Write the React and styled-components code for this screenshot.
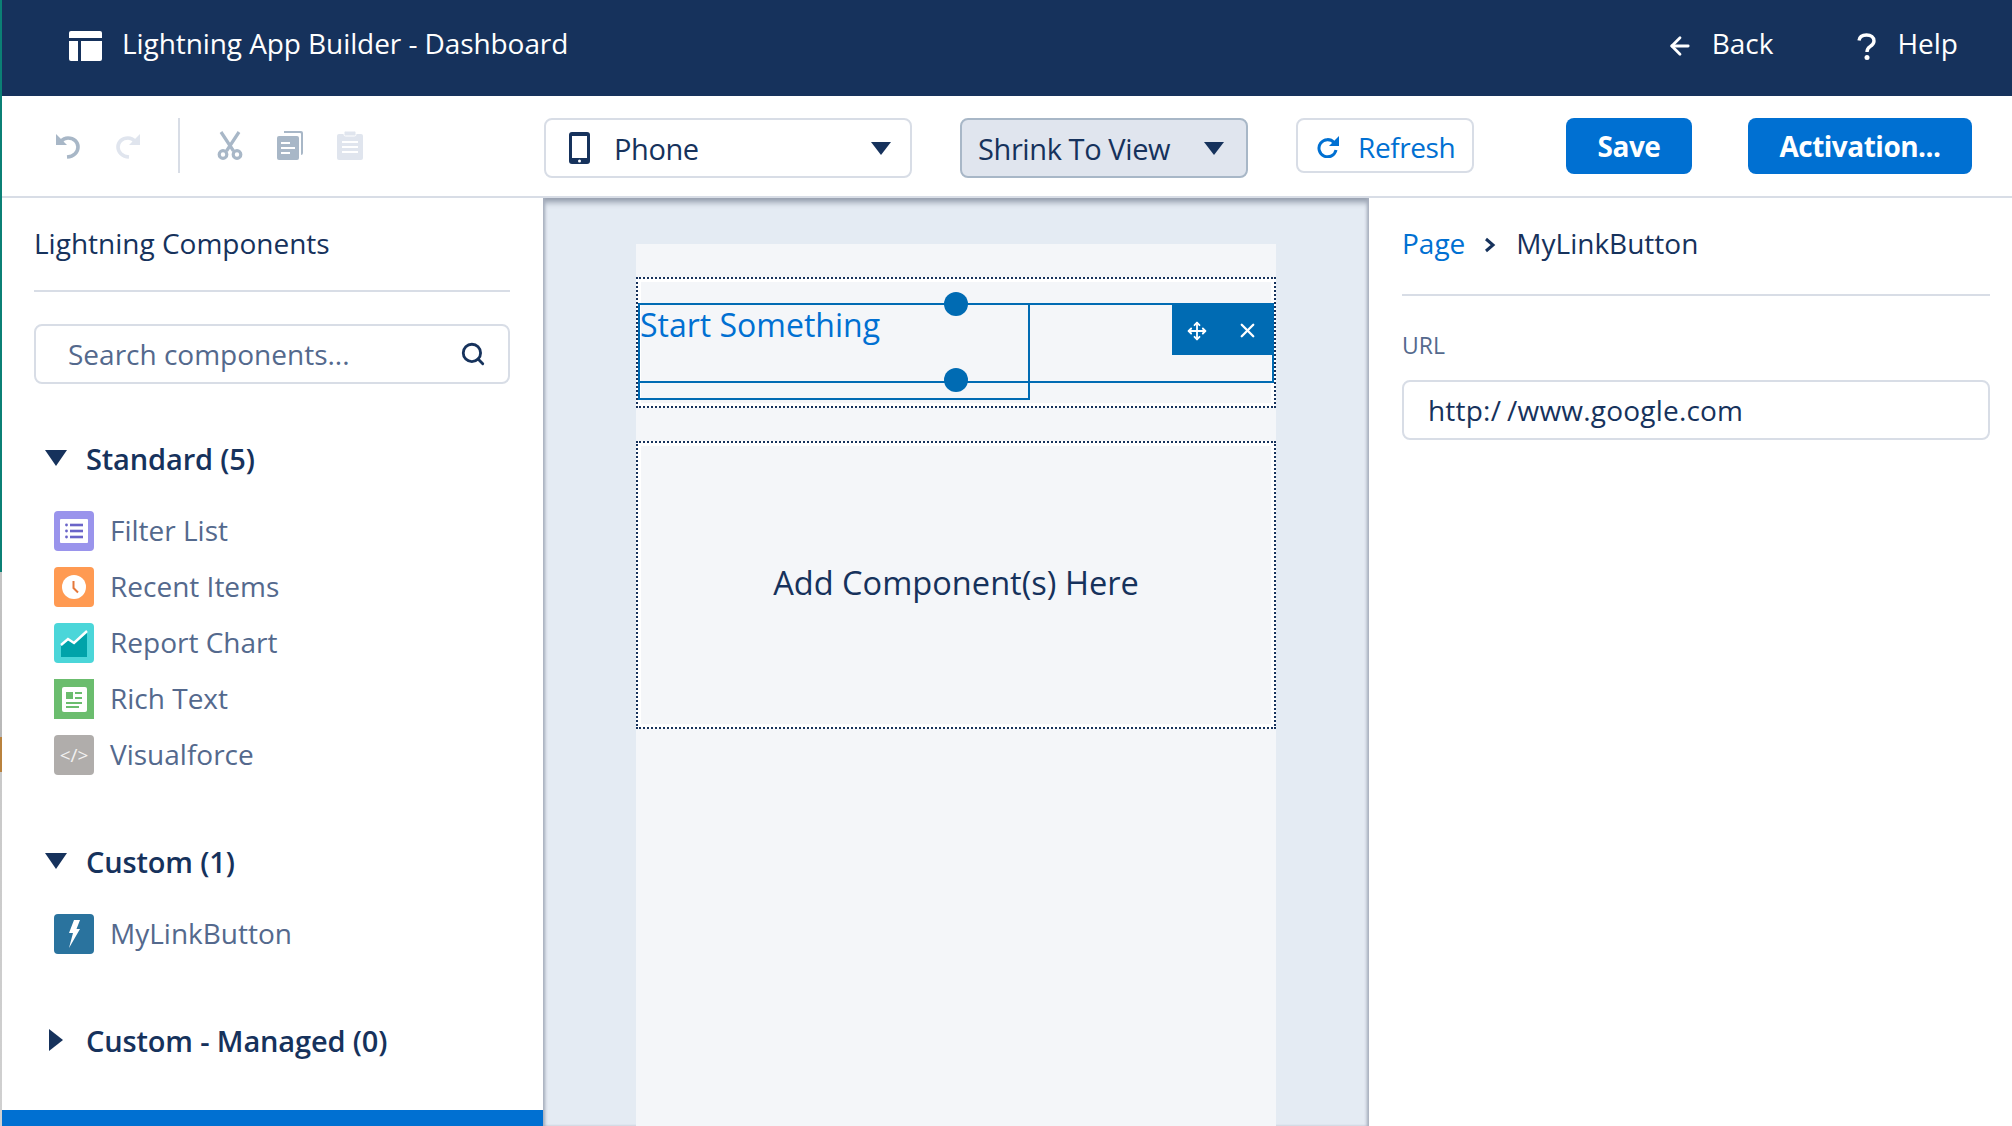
import React from "react";
import styled, { createGlobalStyle } from "styled-components";
import { ArrowLeft, Move, Search, X } from "lucide-react";

const NAVY = "#16325c";
const MUTED = "#54698d";
const LINE = "#d8dde6";
const BLUE = "#0070d2";
const SELECT = "#006bb3";

const GlobalStyle = createGlobalStyle`
    html, body {
        margin: 0;
        padding: 0;
        background: #fff;
    }
    * {
        box-sizing: border-box;
    }
    body {
        font-family: "Open Sans", "Noto Sans", sans-serif;
        color: ${NAVY};
    }
`;

const Page = styled.div`
    display: flex;
    width: 2012px;
    height: 1126px;
    overflow: hidden;
`;

// sliver of the window behind, visible at the left edge of the screenshot
const EdgeStrip = styled.div`
    width: 2px;
    flex: none;
    background: linear-gradient(
        to bottom,
        #0b8075 0,
        #0b8075 572px,
        #c4c4c4 572px,
        #b8b8b8 737px,
        #b9823e 737px,
        #b9823e 772px,
        #c9c9c9 772px,
        #d0d0d0 100%
    );
`;

const Main = styled.div`
    flex: 1;
    min-width: 0;
    display: flex;
    flex-direction: column;
`;

const Header = styled.header`
    height: 96px;
    flex: none;
    background: ${NAVY};
    color: #fff;
    display: flex;
    align-items: center;
    padding: 0 54px 4px 67px;
`;

const AppTitle = styled.div`
    font-size: 28px;
    letter-spacing: -0.08px;
    margin: 0 0 6px 20px;
    flex: 1;
`;

const HeaderLink = styled.div`
    display: flex;
    align-items: center;
    font-size: 28px;
    gap: ${(p) => p.$gap}px;
    margin-left: ${(p) => p.$offset}px;
`;

const LinkText = styled.span`
    margin-bottom: 6px;
`;

const Toolbar = styled.div`
    height: 102px;
    flex: none;
    display: flex;
    align-items: flex-start;
    padding: 22px 0 0 53px;
    background: #fff;
    border-bottom: 2px solid ${LINE};
`;

const ToolGroup = styled.div`
    display: flex;
    align-items: center;
    gap: ${(p) => p.$gap}px;
    height: 55px;
    margin-right: ${(p) => p.$after}px;
`;

const ToolDivider = styled.div`
    width: 2px;
    height: 55px;
    background: ${LINE};
    margin: 0 37px;
`;

const Select = styled.div`
    width: ${(p) => p.$width}px;
    height: 60px;
    margin-right: ${(p) => p.$after}px;
    border: 2px solid ${(p) => (p.$active ? "#a8b7c7" : LINE)};
    border-radius: 8px;
    background: ${(p) => (p.$active ? "#e0e5ee" : "#fff")};
    display: flex;
    align-items: center;
    padding: 0 ${(p) => p.$right}px 0 ${(p) => p.$left}px;
    font-size: 29px;
    letter-spacing: -0.4px;
    color: ${NAVY};
`;

const SelectLabel = styled.span`
    flex: 1;
    margin-left: ${(p) => p.$indent || 0}px;
`;

const Caret = styled.span`
    display: block;
    flex: none;
    width: 0;
    height: 0;
    border-left: ${(p) => p.$size}px solid transparent;
    border-right: ${(p) => p.$size}px solid transparent;
    border-top: ${(p) => p.$depth}px solid ${NAVY};
`;

const RightCaret = styled.span`
    display: block;
    width: 0;
    height: 0;
    border-top: 11px solid transparent;
    border-bottom: 11px solid transparent;
    border-left: 14px solid ${NAVY};
`;

const RefreshButton = styled.div`
    width: 178px;
    height: 55px;
    margin-right: 92px;
    border: 2px solid ${LINE};
    border-radius: 8px;
    display: flex;
    align-items: center;
    gap: 18px;
    padding: 2px 0 0 19px;
    color: ${BLUE};
    font-size: 28px;
    letter-spacing: -0.4px;
`;

const BrandButton = styled.div`
    width: ${(p) => p.$width}px;
    height: 56px;
    margin-right: ${(p) => p.$after}px;
    border-radius: 8px;
    background: ${BLUE};
    color: #fff;
    display: flex;
    align-items: center;
    justify-content: center;
    font-size: 28px;
    font-weight: 700;
    letter-spacing: -0.5px;
`;

const Body = styled.div`
    flex: 1;
    min-height: 0;
    display: flex;
`;

const LeftPanel = styled.aside`
    width: 541px;
    flex: none;
    display: flex;
    flex-direction: column;
    background: #fff;
`;

const LeftContent = styled.div`
    flex: 1;
    padding: 0 33px 0 32px;
`;

const PanelTitle = styled.div`
    height: 94px;
    display: flex;
    align-items: center;
    padding-bottom: 2px;
    font-size: 28px;
    border-bottom: 2px solid ${LINE};
`;

const SearchBox = styled.div`
    height: 60px;
    margin-top: 32px;
    border: 2px solid ${LINE};
    border-radius: 8px;
    display: flex;
    align-items: center;
    padding: 0 22px 0 32px;
    color: ${MUTED};
    font-size: 28px;
`;

const SearchText = styled.span`
    flex: 1;
`;

const SectionHead = styled.div`
    height: 40px;
    margin-top: ${(p) => p.$top}px;
    display: flex;
    align-items: center;
    padding-bottom: 3px;
    font-size: 29px;
    font-weight: 600;
    letter-spacing: -0.15px;
    color: ${NAVY};
`;

const CaretSlot = styled.span`
    width: 52px;
    padding-left: ${(p) => p.$inset}px;
    flex: none;
    margin-top: -2px;
`;

const ItemList = styled.ul`
    list-style: none;
    margin: 31px 0 0;
    padding: 0 0 0 20px;
    display: flex;
    flex-direction: column;
    gap: 16px;
`;

const Item = styled.li`
    height: 40px;
    display: flex;
    align-items: center;
    gap: 16px;
    font-size: 28px;
    color: ${MUTED};
`;

const ItemLabel = styled.span`
    margin-bottom: 2px;
`;

const ItemIcon = styled.span`
    width: 40px;
    height: 40px;
    flex: none;
    border-radius: ${(p) => (p.$square ? 0 : 4)}px;
    background: ${(p) => p.$bg};
    display: flex;
    align-items: center;
    justify-content: center;
`;

const CodeGlyph = styled.span`
    color: #f3f2f2;
    font-size: 19px;
`;

const BottomBar = styled.div`
    height: 16px;
    flex: none;
    background: ${BLUE};
`;

const Center = styled.main`
    flex: 1;
    min-width: 0;
    background: #e4ebf3;
    box-shadow: inset 3px 0 3px -1px #a8b0bf, inset -3px 0 3px -1px #a8b0bf, inset 0 6px 6px -2px #8d96a6;
    display: flex;
    justify-content: center;
    padding-top: 46px;
`;

const Canvas = styled.div`
    width: 640px;
    background: #f4f6f9;
    padding-top: 33px;
    display: flex;
    flex-direction: column;
    gap: 33px;
    align-items: stretch;
    height: 1200px;
`;

const DropRegion = styled.div`
    position: relative;
    height: ${(p) => p.$height}px;
    border: 2px dotted ${NAVY};
    background: #fff;
    padding: 3px;
`;

const RegionFill = styled.div`
    height: 100%;
    background: #f4f6f9;
    display: flex;
    align-items: center;
    justify-content: center;
    padding-bottom: 6px;
    font-size: 32.6px;
    color: ${NAVY};
`;

// selection frames drawn over the dropped component
const SelectionFrame = styled.div`
    position: absolute;
    left: 0;
    top: 24px;
    right: 0;
    height: 80px;
    border: 2px solid ${SELECT};
`;

const ComponentFrame = styled.div`
    position: absolute;
    left: 0;
    top: 24px;
    width: 392px;
    height: 97px;
    border: 2px solid ${SELECT};
    font-size: 32px;
    line-height: 40px;
    color: ${BLUE};
`;

const Handle = styled.span`
    position: absolute;
    left: 50%;
    width: 24px;
    height: 24px;
    margin-left: -12px;
    border-radius: 50%;
    background: ${SELECT};
    ${(p) => (p.$bottom ? "bottom: -11px;" : "top: -13px;")}
`;

const ToolBox = styled.div`
    position: absolute;
    top: -2px;
    right: -2px;
    width: 102px;
    height: 52px;
    background: ${SELECT};
    color: #fff;
    display: flex;
    align-items: center;
    justify-content: space-between;
    padding: 3px 15px 0 15px;
`;

const RightPanel = styled.aside`
    width: 643px;
    flex: none;
    background: #fff;
    padding: 0 22px 0 33px;
`;

const Breadcrumb = styled.div`
    height: 98px;
    display: flex;
    align-items: center;
    padding-bottom: 6px;
    font-size: 28px;
    border-bottom: 2px solid ${LINE};
`;

const CrumbLink = styled.span`
    color: ${BLUE};
`;

const CrumbArrow = styled.svg`
    margin: 4px 20px 0 19px;
`;

const FieldLabel = styled.div`
    margin-top: 31px;
    height: 36px;
    display: flex;
    align-items: center;
    font-size: 23px;
    color: ${MUTED};
`;

const FieldInput = styled.div`
    height: 60px;
    margin-top: 17px;
    border: 2px solid ${LINE};
    border-radius: 8px;
    display: flex;
    align-items: center;
    padding-left: 24px;
    font-size: 28px;
    letter-spacing: 0.2px;
    color: ${NAVY};
`;

const SlashGap = styled.span`
    margin-right: 6px;
`;

const AppLogo = () => (
    <svg width="33" height="30" viewBox="0 0 33 30">
        <path d="M2 0h29a2 2 0 0 1 2 2v5H0V2a2 2 0 0 1 2-2z" fill="#fff" />
        <path d="M0 10h9v20H2a2 2 0 0 1-2-2z" fill="#fff" />
        <path d="M12 10h21v18a2 2 0 0 1-2 2H12z" fill="#fff" />
    </svg>
);

const UndoIcon = ({ color, flip }) => (
    <svg width="26" height="26" viewBox="0 0 26 26" style={flip ? { transform: "scaleX(-1)" } : undefined}>
        <path d="M1 1v11h11z" fill={color} />
        <path d="M6 8.5c2-2.5 4-3.5 7-3.5 6 0 10 4 10 9s-4 9.5-11 10" fill="none" stroke={color} strokeWidth="3.6" />
    </svg>
);

const ScissorsIcon = () => (
    <svg width="26" height="29" viewBox="0 0 26 29">
        <g fill="none" stroke="#a8b7c7" strokeWidth="3.2">
            <path d="M4 1l12.5 19M22 1L9.5 20" />
            <circle cx="6" cy="23.5" r="3.8" />
            <circle cx="20" cy="23.5" r="3.8" />
        </g>
    </svg>
);

const CopyIcon = () => (
    <svg width="26" height="29" viewBox="0 0 26 29">
        <path d="M7 0h17a2 2 0 0 1 2 2v20a2 2 0 0 1-2 2v-21a1 1 0 0 0-1-1H7z" fill="#a8b7c7" />
        <path d="M2 5h18a2 2 0 0 1 2 2v20a2 2 0 0 1-2 2H2a2 2 0 0 1-2-2V7a2 2 0 0 1 2-2z" fill="#a8b7c7" />
        <path d="M4 12h9M4 17h14M4 22h9" stroke="#fff" strokeWidth="2" />
    </svg>
);

const PasteIcon = () => (
    <svg width="26" height="29" viewBox="0 0 26 29">
        <path d="M2 3h22a2 2 0 0 1 2 2v22a2 2 0 0 1-2 2H2a2 2 0 0 1-2-2V5a2 2 0 0 1 2-2z" fill="#e0e5ee" />
        <rect x="7" y="0" width="12" height="5" rx="1.5" fill="#e0e5ee" stroke="#fff" strokeWidth="1" />
        <path d="M5 11h16M5 16h16M5 21h16" stroke="#fff" strokeWidth="2" />
    </svg>
);

const PhoneIcon = () => (
    <svg width="21" height="32" viewBox="0 0 21 32">
        <rect width="21" height="32" rx="3" fill={NAVY} />
        <rect x="3" y="4" width="15" height="22" fill="#fff" />
        <circle cx="10.5" cy="29" r="1.5" fill="#fff" />
    </svg>
);

const RefreshIcon = () => (
    <svg width="23" height="22" viewBox="0 0 23 22">
        <path d="M17 6.5A8.6 8.6 0 1 0 19 14" fill="none" stroke={BLUE} strokeWidth="3" />
        <path d="M22 0v10H12z" fill={BLUE} />
    </svg>
);

const HelpIcon = () => (
    <svg width="19" height="27" viewBox="0 0 19 27">
        <path d="M2 7.5C2.5 4 5 2 9.5 2 14 2 17 4.5 17 8c0 3-2 4.3-4 5.6-2 1.3-3 2.4-3 5.4" fill="none" stroke="#fff" strokeWidth="3.4" />
        <circle cx="10" cy="24.5" r="2.5" fill="#fff" />
    </svg>
);

const FilterGlyph = () => (
    <svg width="28" height="24" viewBox="0 0 28 24">
        <rect width="28" height="24" rx="1" fill="#fff" />
        <g fill="#6a64c8">
            <circle cx="6.5" cy="6" r="1.4" />
            <circle cx="6.5" cy="12" r="1.4" />
            <circle cx="6.5" cy="18" r="1.4" />
            <rect x="10" y="4.7" width="13" height="2.6" />
            <rect x="10" y="10.7" width="13" height="2.6" />
            <rect x="10" y="16.7" width="13" height="2.6" />
        </g>
    </svg>
);

const ClockGlyph = () => (
    <svg width="24" height="24" viewBox="0 0 24 24">
        <circle cx="12" cy="12" r="12" fill="#fff" />
        <path d="M11.5 6v7l4.5 4.5" fill="none" stroke="#e5783a" strokeWidth="2" />
    </svg>
);

const ChartGlyph = () => (
    <svg width="28" height="27" viewBox="0 0 28 27">
        <path d="M1 27V16l7-6 6 4L27 3v24z" fill="#00a3aa" />
        <path d="M1 15l7-6 6 4L27 1" fill="none" stroke="#fff" strokeWidth="2.4" />
    </svg>
);

const RichTextGlyph = () => (
    <svg width="25" height="25" viewBox="0 0 25 25">
        <rect width="25" height="25" rx="2" fill="#fff" />
        <g fill="#6bbd6e">
            <rect x="4" y="5" width="7" height="7" />
            <rect x="13" y="5" width="7" height="2" />
            <rect x="13" y="10" width="7" height="2" />
            <rect x="4" y="15" width="16" height="2" />
            <rect x="4" y="19" width="13" height="2" />
        </g>
    </svg>
);

const BoltGlyph = () => (
    <svg width="14" height="28" viewBox="0 0 14 28">
        <path d="M7 0h6L9.5 9H13L2 28l4-15H2z" fill="#fff" />
    </svg>
);

const standardItems = [
    { label: "Filter List", bg: "#9a94ec", icon: <FilterGlyph /> },
    { label: "Recent Items", bg: "#ff9a52", icon: <ClockGlyph /> },
    { label: "Report Chart", bg: "#4bd6d9", icon: <ChartGlyph /> },
    { label: "Rich Text", bg: "#6bbd6e", icon: <RichTextGlyph />, square: true },
    { label: "Visualforce", bg: "#b0adab", icon: <CodeGlyph>&lt;/&gt;</CodeGlyph> },
];

function ComponentRow({ item }) {
    return (
        <Item>
            <ItemIcon $bg={item.bg} $square={item.square}>
                {item.icon}
            </ItemIcon>
            <ItemLabel>{item.label}</ItemLabel>
        </Item>
    );
}

export default function App() {
    return (
        <Page>
            <GlobalStyle />
            <EdgeStrip />
            <Main>
                <Header>
                    <AppLogo />
                    <AppTitle>Lightning App Builder - Dashboard</AppTitle>
                    <HeaderLink $gap={18} $offset={0}>
                        <ArrowLeft size={28} strokeWidth={2.4} />
                        <LinkText>Back</LinkText>
                    </HeaderLink>
                    <HeaderLink $gap={21} $offset={84}>
                        <HelpIcon />
                        <LinkText>Help</LinkText>
                    </HeaderLink>
                </Header>

                <Toolbar>
                    <ToolGroup $gap={34}>
                        <UndoIcon color="#a8b7c7" />
                        <UndoIcon color="#e0e5ee" flip />
                    </ToolGroup>
                    <ToolDivider />
                    <ToolGroup $gap={34} $after={181}>
                        <ScissorsIcon />
                        <CopyIcon />
                        <PasteIcon />
                    </ToolGroup>
                    <Select $width={368} $after={48} $left={23} $right={19}>
                        <PhoneIcon />
                        <SelectLabel $indent={24}>Phone</SelectLabel>
                        <Caret $size={10} $depth={13} />
                    </Select>
                    <Select $width={288} $after={48} $left={16} $right={22} $active>
                        <SelectLabel>Shrink To View</SelectLabel>
                        <Caret $size={10} $depth={13} />
                    </Select>
                    <RefreshButton>
                        <RefreshIcon />
                        Refresh
                    </RefreshButton>
                    <BrandButton $width={126} $after={56}>
                        Save
                    </BrandButton>
                    <BrandButton $width={224}>Activation...</BrandButton>
                </Toolbar>

                <Body>
                    <LeftPanel>
                        <LeftContent>
                            <PanelTitle>Lightning Components</PanelTitle>
                            <SearchBox>
                                <SearchText>Search components...</SearchText>
                                <Search size={26} strokeWidth={2.6} color={NAVY} />
                            </SearchBox>

                            <SectionHead $top={56}>
                                <CaretSlot $inset={11}>
                                    <Caret $size={11} $depth={16} />
                                </CaretSlot>
                                Standard (5)
                            </SectionHead>
                            <ItemList>
                                {standardItems.map((item) => (
                                    <ComponentRow key={item.label} item={item} />
                                ))}
                            </ItemList>

                            <SectionHead $top={68}>
                                <CaretSlot $inset={11}>
                                    <Caret $size={11} $depth={16} />
                                </CaretSlot>
                                Custom (1)
                            </SectionHead>
                            <ItemList>
                                <ComponentRow item={{ label: "MyLinkButton", bg: "#2a739e", icon: <BoltGlyph /> }} />
                            </ItemList>

                            <SectionHead $top={68}>
                                <CaretSlot $inset={15}>
                                    <RightCaret />
                                </CaretSlot>
                                Custom - Managed (0)
                            </SectionHead>
                        </LeftContent>
                        <BottomBar />
                    </LeftPanel>

                    <Center>
                        <Canvas>
                            <DropRegion $height={131}>
                                <RegionFill />
                                <ComponentFrame>Start Something</ComponentFrame>
                                <SelectionFrame>
                                    <Handle />
                                    <Handle $bottom />
                                    <ToolBox>
                                        <Move size={20} strokeWidth={2.2} />
                                        <X size={23} strokeWidth={2.4} />
                                    </ToolBox>
                                </SelectionFrame>
                            </DropRegion>
                            <DropRegion $height={288}>
                                <RegionFill>Add Component(s) Here</RegionFill>
                            </DropRegion>
                        </Canvas>
                    </Center>

                    <RightPanel>
                        <Breadcrumb>
                            <CrumbLink>Page</CrumbLink>
                            <CrumbArrow width="12" height="16" viewBox="0 0 12 16">
                                <path d="M2 2l7 6-7 6" fill="none" stroke={NAVY} strokeWidth="3" />
                            </CrumbArrow>
                            MyLinkButton
                        </Breadcrumb>
                        <FieldLabel>URL</FieldLabel>
                        <FieldInput>
                            http:<SlashGap>/</SlashGap>/www.google.com
                        </FieldInput>
                    </RightPanel>
                </Body>
            </Main>
        </Page>
    );
}
